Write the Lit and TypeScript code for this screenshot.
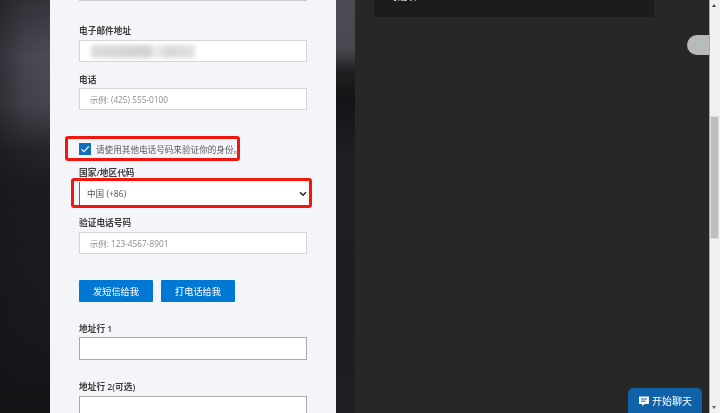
import { LitElement, html, css } from "lit";
import { customElement } from "lit/decorators.js";

@customElement("app-root")
export class AppRoot extends LitElement {
  static styles = css`
    :host {
      display: block;
      width: 720px;
      height: 413px;
      overflow: hidden;
      position: relative;
      font-family: "Open Sans", "Noto Sans CJK SC", sans-serif;
      background: #262626;
    }
    .stage { width: 720px; height: 413px; position: relative; filter: blur(0.35px); }
    .page { display: flex; height: 413px; }
    .left {
      width: 50px; flex: none;
      background:
        linear-gradient(90deg, rgba(20,20,24,0.45) 0%, rgba(20,20,24,0.1) 50%, rgba(20,20,24,0) 100%),
        linear-gradient(180deg, #33343a 0%, #4b4c55 55px, #45464e 105px, #24252a 150px, #1b1c21 185px, #18181d 330px, #141417 413px);
    }
    .panel {
      width: 286px; flex: none; box-sizing: border-box; background: #f3f5f8;
      padding: 0 29px; overflow: hidden; position: relative;
    }
    .strip {
      width: 19px; flex: none;
      background: linear-gradient(180deg, #4b4c53 0%, #4a4b52 48px, #201d20 72px, #131417 100px, #1f2026 160px, #1c1d21 300px, #1e1f24 413px);
    }
    .main { flex: 1; position: relative; min-width: 0; background: #272727; }
    .bar {
      width: 10px; flex: none; background: #f1f1f1; border-left: 1px solid #a8a8a8; box-sizing: content-box;
      position: relative;
    }
    .thumb { position: absolute; left: 1px; top: 117px; width: 7px; height: 121px; background: #bdbdbd; box-shadow: 0 0 0 1px #dedede; }
    .arrow { position: absolute; left: 2px; width: 0; height: 0; border-left: 2.5px solid transparent; border-right: 2.5px solid transparent; }
    .arrow.up { top: 4px; border-bottom: 3px solid #444; }
    .arrow.down { bottom: 4px; border-top: 3px solid #666; }
    .top-line { height: 1px; background: #c9cbcd; }
    .lbl { font-size: 8.7px; line-height: 12px; font-weight: 600; color: #3f3f3f; }
    .field {
      box-sizing: border-box; width: 228px; height: 22px; background: #fff; border: 1px solid #d5d6d8;
      display: flex; align-items: center; padding-left: 10px; font-size: 8.3px; color: #8c8c8c;
    }
    .field.strong { height: 23px; border: 1px solid #a9a9a9; }
    .blur {
      width: 104px; height: 13px; margin-left: 1px; margin-top: 1px;
      background: linear-gradient(90deg, #dcdcdc, #d2d2d2 55%, #ededed 62%, #d8d8d8 75%, #e2e2e2);
      filter: blur(2px);
    }
    .email-lbl { margin-top: 24px; }
    .gap-l { margin-top: 12px; }
    .gap-m { margin-top: 21px; }
    .near { margin-top: 2px; }
    .nearer { margin-top: 3px; }
    .check-row { display: flex; align-items: center; gap: 5px; margin-top: 33px; height: 12px; font-size: 8.6px; color: #5a5a5a; }
    .box { width: 12px; height: 12px; background: #106ebe; display: flex; align-items: center; justify-content: center; flex: none; }
    .select {
      box-sizing: border-box; width: 228px; height: 23px; background: #fff; border-left: 1px solid #2c78c0;
      display: flex; align-items: center; justify-content: space-between; padding-left: 7px; font-size: 8.6px; color: #555;
    }
    .buttons { display: flex; gap: 8px; margin-top: 26px; }
    .btn {
      width: 74px; height: 22px; background: #0078d4; border-radius: 1px; color: #fff; font-size: 9.2px;
      display: flex; align-items: center; justify-content: center;
    }
    .card {
      position: absolute; left: 19px; top: 0; width: 280px; height: 17px; background: #1c1c1f;
      border-radius: 0 0 3px 3px; color: #e8e8e8; font-size: 9px; overflow: hidden;
    }
    .card span { position: absolute; left: 15px; top: -9px; line-height: 12px; }
    .pill {
      position: absolute; right: 0; top: 35px; width: 22px; height: 20px;
      background: radial-gradient(circle at 14px 10px, #a9c4c2 0, #b9b9b9 6px);
      border-radius: 10px 0 0 10px;
    }
    .chat {
      position: absolute; left: 628px; top: 388px; width: 74px; height: 25px; background: #0f62a8;
      border-radius: 5px 5px 0 0; display: flex; align-items: center; justify-content: center; gap: 2px;
      color: #fff; font-size: 10px;
    }
    .red { position: absolute; box-sizing: border-box; border: 3px solid #f0170f; border-radius: 3px; }
    .r1 { left: 65px; top: 136px; width: 175px; height: 25px; }
    .r2 { left: 71px; top: 178px; width: 241px; height: 30px; }
  `;

  render() {
    return html`
      <div class="stage">
        <div class="page">
          <div class="left"></div>
          <div class="panel">
            <div class="top-line"></div>
            <div class="lbl email-lbl">电子邮件地址</div>
            <div class="field nearer"><div class="blur"></div></div>
            <div class="lbl gap-l">电话</div>
            <div class="field near">示例: (425) 555-0100</div>
            <div class="check-row">
              <div class="box">
                <svg width="10" height="10" viewBox="0 0 10 10"><path d="M1.5 5.2 L4 7.6 L8.8 2.4" fill="none" stroke="#fff" stroke-width="1.1"/></svg>
              </div>
              <span>请使用其他电话号码来验证你的身份。</span>
            </div>
            <div class="lbl gap-l">国家/地区代码</div>
            <div class="select nearer">
              <span>中国 (+86)</span>
              <svg width="8" height="6" viewBox="0 0 8 6"><path d="M1 1.2 L4 4.2 L7 1.2" fill="none" stroke="#222" stroke-width="1.5"/></svg>
            </div>
            <div class="lbl gap-l">验证电话号码</div>
            <div class="field nearer">示例: 123-4567-8901</div>
            <div class="buttons"><div class="btn">发短信给我</div><div class="btn">打电话给我</div></div>
            <div class="lbl gap-m">地址行 1</div>
            <div class="field strong near"></div>
            <div class="lbl gap-m">地址行 2(可选)</div>
            <div class="field strong nearer"></div>
          </div>
          <div class="strip"></div>
          <div class="main">
            <div class="card"><span>可选项</span></div>
            <div class="pill"></div>
          </div>
          <div class="bar">
            <div class="arrow up"></div>
            <div class="thumb"></div>
            <div class="arrow down"></div>
          </div>
        </div>
        <div class="red r1"></div>
        <div class="red r2"></div>
        <div class="chat">
          <svg width="12" height="12" viewBox="0 0 12 12"><path d="M1 1.5 H11 V9 H6.5 L4 11 V9 H1 Z" fill="#fff"/><path d="M3 4 H9 M3 6.2 H7.5" stroke="#0f62a8" stroke-width="1"/></svg>
          <span>开始聊天</span>
        </div>
      </div>
    `;
  }
}
